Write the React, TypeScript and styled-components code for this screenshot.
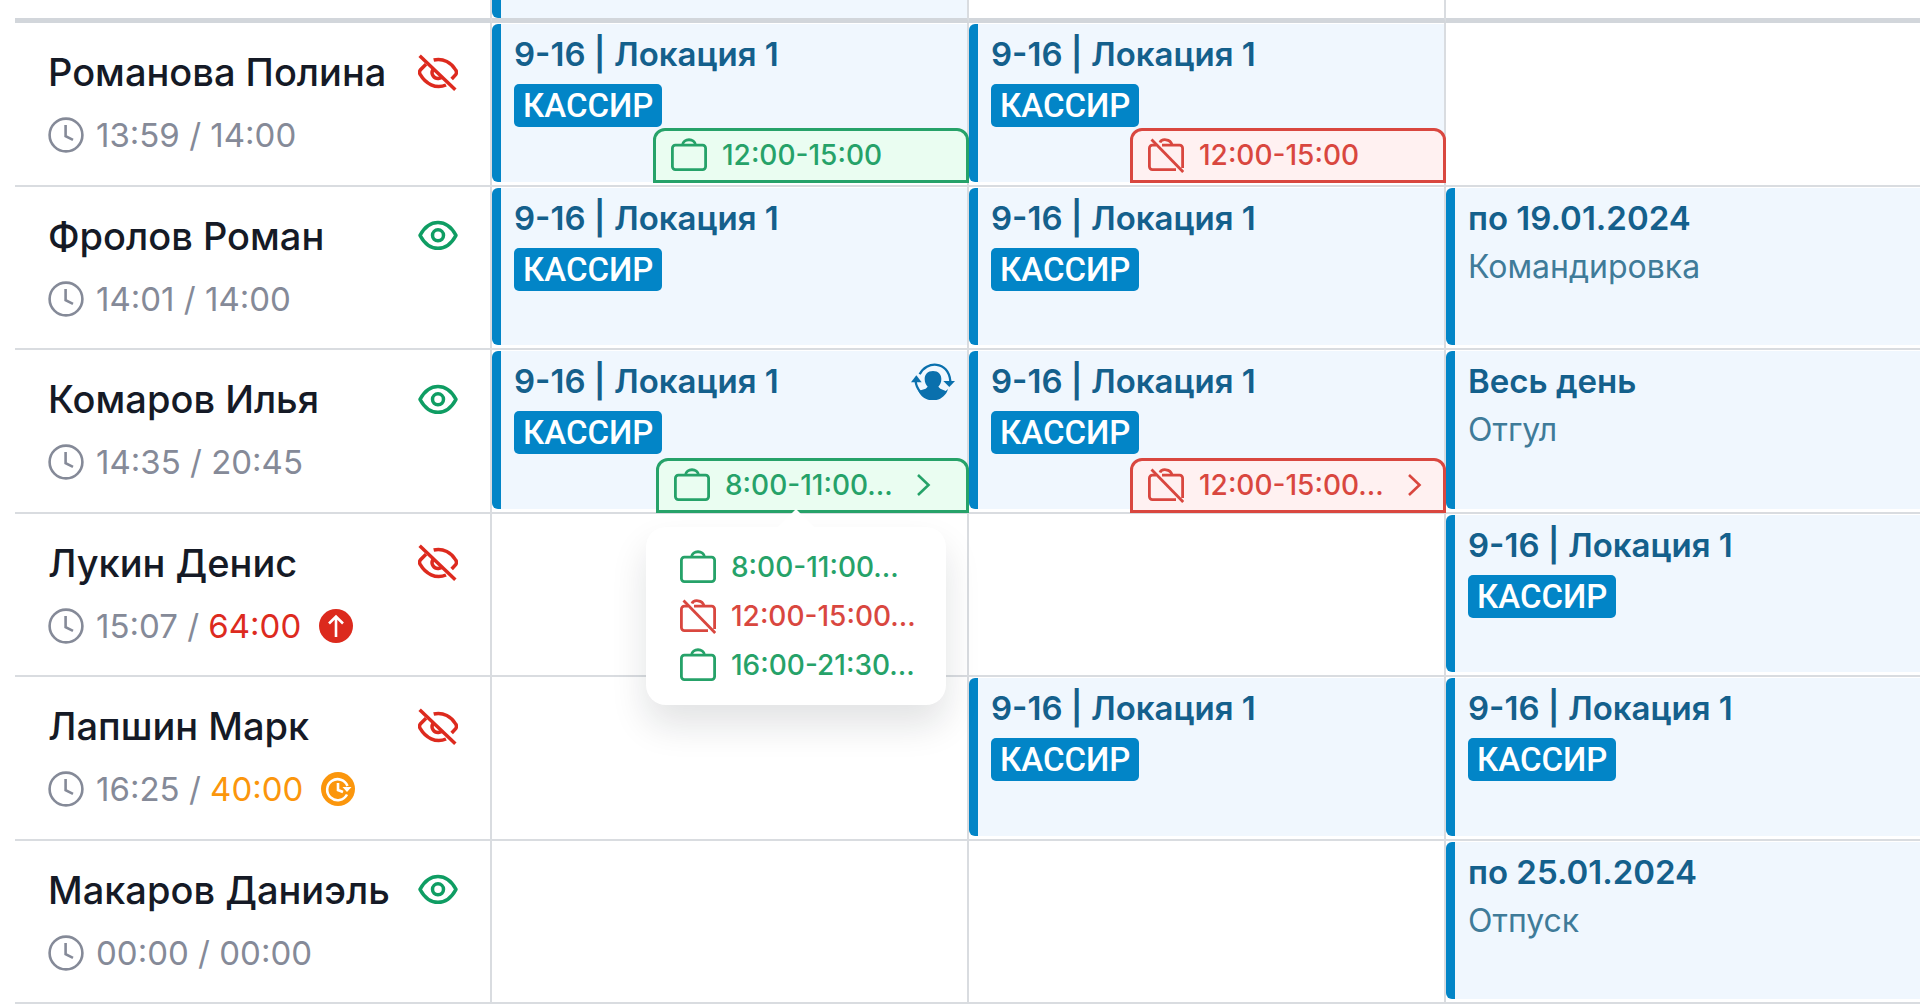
import React from "react";
import styled, { createGlobalStyle, css } from "styled-components";

const color = {
  line: "#d9dce0",
  headLine: "#d2d6db",
  ink: "#151a26",
  muted: "#858a98",
  blue: "#0285c7",
  blueInk: "#14608c",
  blueSoft: "#3f7b99",
  sky: "#f0f7fe",
  green: "#26a269",
  eyeGreen: "#0f9d63",
  greenBg: "#eafdf1",
  red: "#d9473f",
  eyeRed: "#dd2a1e",
  redBg: "#fff1f1",
  orange: "#fb960c",
};

const GlobalStyle = createGlobalStyle`
  *, *::before, *::after { box-sizing: border-box; }
  body {
    margin: 0;
    background: #fff;
    color: ${color.ink};
    font-family: Inter, "Liberation Sans", sans-serif;
    overflow: hidden;
  }
  button { font: inherit; cursor: pointer; }
  svg { flex-shrink: 0; }
`;

const Board = styled.main`
  padding-left: 15px;
  margin-right: -3px;
`;

const Table = styled.table`
  width: 100%;
  height: 100vh;
  table-layout: fixed;
  border-collapse: separate;
  border-spacing: 0;
`;

const HeadCell = styled.td`
  height: 23px;
  padding: 0;
  border-right: 2px solid ${color.line};
  border-bottom: 5px solid ${color.headLine};
`;

const HeadCard = styled.div`
  height: 18px;
  background: ${color.sky};
  border-left: 9px solid ${color.blue};
  border-radius: 0 0 0 6px;
`;

const cellBase = css`
  height: 163px;
  border-right: 2px solid ${color.line};
  border-bottom: 2px solid ${color.line};
  vertical-align: top;
`;

const PersonCell = styled.th`
  ${cellBase}
  padding: 27px 32px 0 33px;
  text-align: left;
  font-weight: 400;
`;

const DayCell = styled.td`
  ${cellBase}
  padding: 1px 0 3px;
`;

const NameLine = styled.div`
  display: flex;
  align-items: center;
  justify-content: space-between;
  height: 44px;
`;

const Name = styled.span`
  font-size: 38px;
  line-height: 44px;
  font-weight: 500;
  white-space: nowrap;
`;

const EyeButton = styled.button<{ $on: boolean }>`
  display: flex;
  padding: 0;
  border: 0;
  background: none;
  color: ${(p) => (p.$on ? color.eyeGreen : color.eyeRed)};
`;

const HoursLine = styled.div`
  display: flex;
  align-items: center;
  gap: 12px;
  margin-top: 21px;
  font-size: 33px;
  line-height: 40px;
  color: ${color.muted};
  white-space: nowrap;
`;

const Limit = styled.span<{ $tone?: string }>`
  color: ${(p) => p.$tone ?? "inherit"};
`;

const HoursBadge = styled.span`
  display: flex;
  margin-left: 6px;
`;

const Card = styled.div`
  position: relative;
  display: flex;
  flex-direction: column;
  align-items: flex-start;
  height: 100%;
  padding: 10px 12px 0 13px;
  background: ${color.sky};
  border-left: 9px solid ${color.blue};
  border-radius: 6px 0 0 6px;
`;

const CardHead = styled.div`
  display: flex;
  align-items: center;
  justify-content: space-between;
  align-self: stretch;
  height: 40px;
  color: ${color.blueInk};
`;

const CardTitle = styled.span`
  font-size: 33px;
  line-height: 40px;
  font-weight: 600;
  white-space: nowrap;
`;

const CardNote = styled.span`
  margin-top: 9px;
  font-size: 32px;
  line-height: 40px;
  color: ${color.blueSoft};
`;

const Role = styled.span`
  margin-top: 10px;
  padding: 0 9px;
  border-radius: 5px;
  background: ${color.blue};
  color: #fff;
  font-family: Roboto, Inter, sans-serif;
  font-size: 33px;
  line-height: 43px;
  font-weight: 500;
`;

const TagSlot = styled.div<{ $more: boolean; $open: boolean }>`
  position: absolute;
  z-index: ${(p) => (p.$open ? 3 : 2)};
  right: -2px;
  bottom: ${(p) => (p.$more ? -4 : -1)}px;
  width: ${(p) => (p.$open ? 313 : 316)}px;
`;

const Tag = styled.button<{ $off: boolean }>`
  display: flex;
  align-items: center;
  width: 100%;
  height: 55px;
  padding: 0 20px 0 15px;
  border: 3px solid currentColor;
  border-radius: 12px 12px 0 0;
  background: ${(p) => (p.$off ? color.redBg : color.greenBg)};
  color: ${(p) => (p.$off ? color.red : color.green)};
`;

const TagText = styled.span`
  margin-left: 15px;
  font-size: 28px;
  line-height: 36px;
  font-weight: 500;
  white-space: nowrap;
`;

const Chevron = styled.svg`
  margin-left: 23px;
`;

const Popover = styled.ul`
  position: absolute;
  top: calc(100% + 14px);
  right: 23px;
  width: 300px;
  margin: 0;
  padding: 16px 34px 15px;
  list-style: none;
  background: #fff;
  border-radius: 20px;
  box-shadow: 0 20px 36px rgba(20, 24, 32, 0.12);

  &::before {
    content: "";
    position: absolute;
    left: 50%;
    bottom: 100%;
    margin-left: -18px;
    border: 18px solid transparent;
    border-top-width: 0;
    border-bottom-color: #fff;
  }
`;

const PopoverItem = styled.li<{ $off: boolean }>`
  display: flex;
  align-items: center;
  height: 49px;
  color: ${(p) => (p.$off ? color.red : color.green)};
`;

const ClockIcon = () => (
  <svg width="36" height="36" viewBox="0 0 36 36" fill="none" stroke="currentColor" strokeWidth="2.6" aria-hidden="true">
    <circle cx="18" cy="18" r="16.4" />
    <path d="M17.6 8v11.2l7.4 3.6" />
  </svg>
);

const EyeIcon = () => (
  <svg width="40" height="37" viewBox="0 0 120 111" fill="none" stroke="currentColor" strokeWidth="10.5" aria-hidden="true">
    <path d="M6 55C19 31 38 16.500 60 16.500S101 31 114 55C101 79 82 94 60 94S19 79 6 55Z" strokeLinejoin="round" />
    <circle cx="60" cy="55" r="16.500" />
  </svg>
);

const EyeOffIcon = () => (
  <svg width="40" height="37" viewBox="0 0 120 111" fill="none" stroke="currentColor" strokeWidth="10.500" aria-hidden="true">
    <path d="M5 5L112 107" />
    <path d="M47 18C76 11 101 27 113 48Q118 55 113 62L101 75" />
    <path d="M24 31L7 48Q2 55 7 62C22 88 53 107 84 93" />
    <path d="M45 46C37 60 48 76 64 73L72 70" />
  </svg>
);

const CaseIcon = ({ off }: { off: boolean }) => (
  <svg width="36" height="36" viewBox="0 0 36 36" fill="none" stroke="currentColor" strokeWidth="2.8" aria-hidden="true">
    {off ? (
      <>
        <path d="M8 8.200H4.400a3 3 0 0 0-3 3V29.600a3 3 0 0 0 3 3H28" />
        <path d="M14 8.200H31.600a3 3 0 0 1 3 3V31" />
        <path d="M12 5.500C13.500 1.500 22.500 1.500 24 7.800" />
        <path d="M3.500 2.500L35.200 35" />
      </>
    ) : (
      <>
        <rect x="1.400" y="8.200" width="33.200" height="24.400" rx="3" />
        <path d="M11.500 8C12 1 24 1 24.500 8" />
      </>
    )}
  </svg>
);

const SwapIcon = () => (
  <svg width="44" height="37" viewBox="0 0 132 111" role="img" aria-label="Замена" fill="#0a70ad">
    <path d="M26 34C45 -7 112 -8 118 54" fill="none" stroke="#0a70ad" strokeWidth="7" />
    <path d="M14 54Q15 72 29 88" fill="none" stroke="#0a70ad" strokeWidth="7" />
    <path d="M0 58L16 37L32 58Z" />
    <path d="M97 54H132L115 72Z" />
    <path d="M66 24C82 24 91 34 91 48C91 59 87 65 82 71L88 77L104 84L111 78C99 121 39 124 22 84L44 77L50 71C45 65 41 59 41 48C41 34 50 24 66 24Z" />
  </svg>
);

const OverIcon = () => (
  <svg width="34" height="34" viewBox="0 0 34 34" role="img" aria-label="Превышение" fill="none" stroke="#fff" strokeWidth="2.600">
    <circle cx="17" cy="17" r="17" fill="#dc2a1d" stroke="none" />
    <path d="M17 28V8M10 14.500L17 7.500L24 14.500" />
  </svg>
);

const OvertimeIcon = () => (
  <svg width="34" height="34" viewBox="0 0 34 34" role="img" aria-label="Переработка" fill="none" stroke="#fff" strokeWidth="2.600">
    <circle cx="17" cy="17" r="17" fill={color.orange} stroke="none" />
    <path d="M26 22.500A10.500 10.500 0 1 1 26.500 14" />
    <path d="M17 11V18L22 20" />
    <path d="M21.500 15H30.500L26 20Z" fill="#fff" stroke="none" />
  </svg>
);

type TagData = { text: string; off?: boolean; more?: boolean; list?: { text: string; off?: boolean }[] };
type Slot = { title: string; role?: string; note?: string; swap?: boolean; tag?: TagData } | null;
type Person = {
  name: string;
  visible: boolean;
  worked: string;
  limit: string;
  state?: "over" | "overtime";
  days: Slot[];
};

const shift = (extra: { swap?: boolean; tag?: TagData } = {}): Slot => ({
  title: "9-16 | Локация 1",
  role: "КАССИР",
  ...extra,
});

const people: Person[] = [
  {
    name: "Романова Полина",
    visible: false,
    worked: "13:59",
    limit: "14:00",
    days: [shift({ tag: { text: "12:00-15:00" } }), shift({ tag: { text: "12:00-15:00", off: true } }), null],
  },
  {
    name: "Фролов Роман",
    visible: true,
    worked: "14:01",
    limit: "14:00",
    days: [shift(), shift(), { title: "по 19.01.2024", note: "Командировка" }],
  },
  {
    name: "Комаров Илья",
    visible: true,
    worked: "14:35",
    limit: "20:45",
    days: [
      shift({
        swap: true,
        tag: {
          text: "8:00-11:00...",
          more: true,
          list: [{ text: "8:00-11:00..." }, { text: "12:00-15:00...", off: true }, { text: "16:00-21:30..." }],
        },
      }),
      shift({ tag: { text: "12:00-15:00...", off: true, more: true } }),
      { title: "Весь день", note: "Отгул" },
    ],
  },
  { name: "Лукин Денис", visible: false, worked: "15:07", limit: "64:00", state: "over", days: [null, null, shift()] },
  { name: "Лапшин Марк", visible: false, worked: "16:25", limit: "40:00", state: "overtime", days: [null, shift(), shift()] },
  {
    name: "Макаров Даниэль",
    visible: true,
    worked: "00:00",
    limit: "00:00",
    days: [null, null, { title: "по 25.01.2024", note: "Отпуск" }],
  },
];

const TimeTag = ({ text, off = false, more = false, list }: TagData) => (
  <TagSlot $more={more} $open={!!list}>
    <Tag type="button" $off={off} aria-expanded={more ? !!list : undefined}>
      <CaseIcon off={off} />
      <TagText>{text}</TagText>
      {more && (
        <Chevron width="16" height="24" viewBox="0 0 16 24" fill="none" stroke="currentColor" strokeWidth="2.600" aria-hidden="true">
          <path d="M2 2L12.500 12L2 22" />
        </Chevron>
      )}
    </Tag>
    {list && (
      <Popover>
        {list.map((item) => (
          <PopoverItem key={item.text} $off={!!item.off}>
            <CaseIcon off={!!item.off} />
            <TagText>{item.text}</TagText>
          </PopoverItem>
        ))}
      </Popover>
    )}
  </TagSlot>
);

const DayCard = ({ slot }: { slot: NonNullable<Slot> }) => (
  <Card>
    <CardHead>
      <CardTitle>{slot.title}</CardTitle>
      {slot.swap && <SwapIcon />}
    </CardHead>
    {slot.role && <Role>{slot.role}</Role>}
    {slot.note && <CardNote>{slot.note}</CardNote>}
    {slot.tag && <TimeTag {...slot.tag} />}
  </Card>
);

const limitTone = { over: color.eyeRed, overtime: color.orange };

export default function App() {
  return (
    <Board>
      <GlobalStyle />
      <Table>
        <thead>
          <tr>
            <HeadCell />
            <HeadCell>
              <HeadCard />
            </HeadCell>
            <HeadCell />
            <HeadCell />
          </tr>
        </thead>
        <tbody>
          {people.map((person) => (
            <tr key={person.name}>
              <PersonCell scope="row">
                <NameLine>
                  <Name>{person.name}</Name>
                  <EyeButton type="button" $on={person.visible} aria-label={person.visible ? "Скрыть" : "Показать"}>
                    {person.visible ? <EyeIcon /> : <EyeOffIcon />}
                  </EyeButton>
                </NameLine>
                <HoursLine>
                  <ClockIcon />
                  <span>
                    {person.worked} / <Limit $tone={person.state && limitTone[person.state]}>{person.limit}</Limit>
                  </span>
                  {person.state && (
                    <HoursBadge>{person.state === "over" ? <OverIcon /> : <OvertimeIcon />}</HoursBadge>
                  )}
                </HoursLine>
              </PersonCell>
              {person.days.map((slot, i) => (
                <DayCell key={i}>{slot && <DayCard slot={slot} />}</DayCell>
              ))}
            </tr>
          ))}
        </tbody>
      </Table>
    </Board>
  );
}
